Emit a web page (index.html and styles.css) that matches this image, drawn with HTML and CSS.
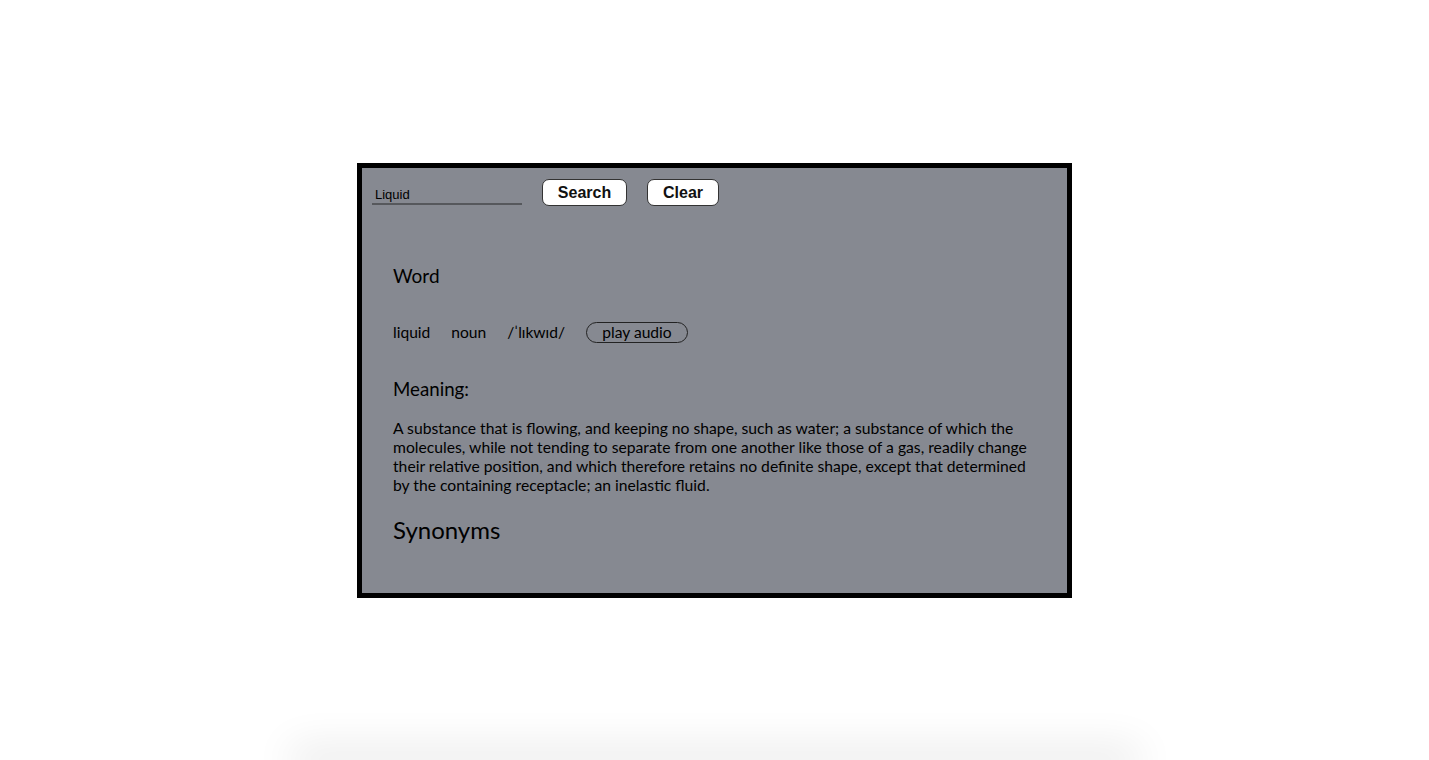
FILE: index.html
```html
<!DOCTYPE html>
<html>
<head>
<meta charset="utf-8">
<link rel="stylesheet" href="styles.css">
</head>
<body>
<div class="page">
  <div class="app">
    <div class="search-bar">
      <input class="search-input" type="text" value="Liquid">
      <button class="btn btn-search">Search</button>
      <button class="btn btn-clear">Clear</button>
    </div>
    <div class="result">
      <h3 class="word-title">Word</h3>
      <div class="word-row">
        <span class="word">liquid</span>
        <span class="pos">noun</span>
        <span class="phonetic">/ˈlɪkwɪd/</span>
        <button class="play">play audio</button>
      </div>
      <h3 class="meaning-title">Meaning:</h3>
      <p class="meaning">A substance that is flowing, and keeping no shape, such as water; a substance of which the molecules, while not tending to separate from one another like those of a gas, readily change their relative position, and which therefore retains no definite shape, except that determined by the containing receptacle; an inelastic fluid.</p>
      <h2 class="syn-title">Synonyms</h2>
    </div>
  </div>
  <div class="shade"></div>
</div>
</body>
</html>
```

FILE: styles.css
```css
html, body {
  margin: 0;
  padding: 0;
  background: #ffffff;
}
body {
  font-family: Lato, "Open Sans", sans-serif;
  color: #000;
}
.page {
  height: 760px;
  padding-top: 163px;
  box-sizing: border-box;
  display: flex;
  flex-direction: column;
  align-items: center;
  overflow: hidden;
}
.app {
  width: 715px;
  height: 435px;
  flex: none;
  box-sizing: border-box;
  border: 5px solid #000;
  background: #868991;
}
.search-bar {
  display: flex;
  align-items: center;
  padding: 11px 10px 0;
}
.search-input {
  width: 150px;
  box-sizing: border-box;
  border: none;
  border-bottom: 2px solid #56585c;
  background: transparent;
  font-family: "Liberation Sans", Arial, sans-serif;
  font-size: 13px;
  padding: 3px 3px 1px;
  color: #000;
  outline: none;
  margin-top: 4px;
}
.btn {
  height: 27px;
  background: #fff;
  border: 1px solid #333;
  border-radius: 7px;
  font-family: "Liberation Sans", Arial, sans-serif;
  font-weight: bold;
  font-size: 16px;
  color: #111;
  padding: 0;
}
.btn-search {
  width: 85px;
  margin-left: 20px;
}
.btn-clear {
  width: 72px;
  margin-left: 20px;
}
.result {
  padding: 0 31px;
}
.word-title {
  font-size: 19px;
  font-weight: normal;
  margin: 58px 0 0;
  line-height: 24px;
}
.word-row {
  display: flex;
  align-items: center;
  margin-top: 32px;
  font-size: 15.6px;
  line-height: 20px;
}
.pos {
  margin-left: 21px;
}
.phonetic {
  margin-left: 21px;
}
.play {
  margin-left: 21px;
  font-family: Lato, sans-serif;
  font-size: 15.6px;
  background: transparent;
  border: 1px solid #222;
  border-radius: 11px;
  width: 102px;
  height: 21px;
  padding: 0;
  line-height: 19px;
  color: #000;
  margin-top: 2px;
}
.meaning-title {
  font-size: 18.7px;
  font-weight: normal;
  margin: 34px 0 0;
  line-height: 24px;
}
.meaning {
  font-size: 15.7px;
  line-height: 19px;
  margin: 18px 0 0;
}
.syn-title {
  font-size: 24px;
  font-weight: normal;
  margin: 21px 0 0;
  line-height: 28px;
}
.shade {
  margin-top: auto;
  width: 820px;
  height: 0;
  flex: none;
  box-shadow: 0 0 40px 14px rgba(0, 0, 0, 0.09);
}
```
